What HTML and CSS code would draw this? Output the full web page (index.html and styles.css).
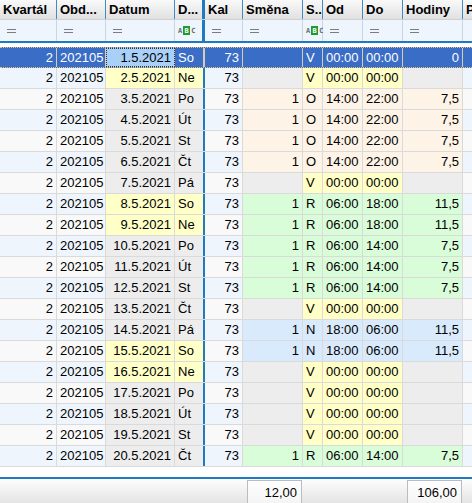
FILE: index.html
```html
<!DOCTYPE html>
<html lang="cs">
<head>
<meta charset="utf-8">
<title>Směny</title>
<link rel="stylesheet" href="styles.css">
</head>
<body>
<div class="grid">
  <div class="cols head">
    <div class="h">Kvartál</div><div class="h">Obd...</div><div class="h">Datum</div><div class="h frozen">D...</div><div class="h">Kal</div><div class="h">Směna</div><div class="h">S..</div><div class="h">Od</div><div class="h">Do</div><div class="h">Hodiny</div><div class="h last">P</div>
  </div>
  <div class="cols filter">
    <div class="f"><span class="eq"></span></div><div class="f"><span class="eq"></span></div><div class="f"><span class="eq"></span></div><div class="f frozen abcf"><span class="abc"><i>A</i><b>B</b><i>C</i></span></div><div class="f"><span class="eq"></span></div><div class="f"><span class="eq"></span></div><div class="f abcf"><span class="abc"><i>A</i><b>B</b><i>C</i></span></div><div class="f"><span class="eq"></span></div><div class="f"><span class="eq"></span></div><div class="f"><span class="eq"></span></div><div class="f last"></div>
  </div>
  <div class="sep-top"></div>

  <div class="cols row sel">
    <div class="num">2</div><div class="num">202105</div><div class="num focus">1.5.2021</div><div class="dcol">So</div><div class="num">73</div><div class="num"></div><div>V</div><div>00:00</div><div>00:00</div><div class="num">0</div><div></div>
  </div>
  <div class="cols row alt">
    <div class="num">2</div><div class="num">202105</div><div class="num wk">2.5.2021</div><div class="dcol wk">Ne</div><div class="num">73</div><div class="num sv"></div><div class="sy">V</div><div class="sy">00:00</div><div class="sy">00:00</div><div class="num sv"></div><div></div>
  </div>
  <div class="cols row">
    <div class="num">2</div><div class="num">202105</div><div class="num wd">3.5.2021</div><div class="dcol wd">Po</div><div class="num">73</div><div class="num so">1</div><div class="so">O</div><div class="so">14:00</div><div class="so">22:00</div><div class="num so">7,5</div><div></div>
  </div>
  <div class="cols row alt">
    <div class="num">2</div><div class="num">202105</div><div class="num wd">4.5.2021</div><div class="dcol wd">Út</div><div class="num">73</div><div class="num so">1</div><div class="so">O</div><div class="so">14:00</div><div class="so">22:00</div><div class="num so">7,5</div><div></div>
  </div>
  <div class="cols row">
    <div class="num">2</div><div class="num">202105</div><div class="num wd">5.5.2021</div><div class="dcol wd">St</div><div class="num">73</div><div class="num so">1</div><div class="so">O</div><div class="so">14:00</div><div class="so">22:00</div><div class="num so">7,5</div><div></div>
  </div>
  <div class="cols row alt">
    <div class="num">2</div><div class="num">202105</div><div class="num wd">6.5.2021</div><div class="dcol wd">Čt</div><div class="num">73</div><div class="num so">1</div><div class="so">O</div><div class="so">14:00</div><div class="so">22:00</div><div class="num so">7,5</div><div></div>
  </div>
  <div class="cols row">
    <div class="num">2</div><div class="num">202105</div><div class="num wd">7.5.2021</div><div class="dcol wd">Pá</div><div class="num">73</div><div class="num sv"></div><div class="sy">V</div><div class="sy">00:00</div><div class="sy">00:00</div><div class="num sv"></div><div></div>
  </div>
  <div class="cols row alt">
    <div class="num">2</div><div class="num">202105</div><div class="num wk">8.5.2021</div><div class="dcol wk">So</div><div class="num">73</div><div class="num sr">1</div><div class="sr">R</div><div class="sr">06:00</div><div class="sr">18:00</div><div class="num sr">11,5</div><div></div>
  </div>
  <div class="cols row">
    <div class="num">2</div><div class="num">202105</div><div class="num wk">9.5.2021</div><div class="dcol wk">Ne</div><div class="num">73</div><div class="num sr">1</div><div class="sr">R</div><div class="sr">06:00</div><div class="sr">18:00</div><div class="num sr">11,5</div><div></div>
  </div>
  <div class="cols row alt">
    <div class="num">2</div><div class="num">202105</div><div class="num wd">10.5.2021</div><div class="dcol wd">Po</div><div class="num">73</div><div class="num sr">1</div><div class="sr">R</div><div class="sr">06:00</div><div class="sr">14:00</div><div class="num sr">7,5</div><div></div>
  </div>
  <div class="cols row">
    <div class="num">2</div><div class="num">202105</div><div class="num wd">11.5.2021</div><div class="dcol wd">Út</div><div class="num">73</div><div class="num sr">1</div><div class="sr">R</div><div class="sr">06:00</div><div class="sr">14:00</div><div class="num sr">7,5</div><div></div>
  </div>
  <div class="cols row alt">
    <div class="num">2</div><div class="num">202105</div><div class="num wd">12.5.2021</div><div class="dcol wd">St</div><div class="num">73</div><div class="num sr">1</div><div class="sr">R</div><div class="sr">06:00</div><div class="sr">14:00</div><div class="num sr">7,5</div><div></div>
  </div>
  <div class="cols row">
    <div class="num">2</div><div class="num">202105</div><div class="num wd">13.5.2021</div><div class="dcol wd">Čt</div><div class="num">73</div><div class="num sv"></div><div class="sy">V</div><div class="sy">00:00</div><div class="sy">00:00</div><div class="num sv"></div><div></div>
  </div>
  <div class="cols row alt">
    <div class="num">2</div><div class="num">202105</div><div class="num wd">14.5.2021</div><div class="dcol wd">Pá</div><div class="num">73</div><div class="num sn">1</div><div class="sn">N</div><div class="sn">18:00</div><div class="sn">06:00</div><div class="num sn">11,5</div><div></div>
  </div>
  <div class="cols row">
    <div class="num">2</div><div class="num">202105</div><div class="num wk">15.5.2021</div><div class="dcol wk">So</div><div class="num">73</div><div class="num sn">1</div><div class="sn">N</div><div class="sn">18:00</div><div class="sn">06:00</div><div class="num sn">11,5</div><div></div>
  </div>
  <div class="cols row alt">
    <div class="num">2</div><div class="num">202105</div><div class="num wk">16.5.2021</div><div class="dcol wk">Ne</div><div class="num">73</div><div class="num sv"></div><div class="sy">V</div><div class="sy">00:00</div><div class="sy">00:00</div><div class="num sv"></div><div></div>
  </div>
  <div class="cols row">
    <div class="num">2</div><div class="num">202105</div><div class="num wd">17.5.2021</div><div class="dcol wd">Po</div><div class="num">73</div><div class="num sv"></div><div class="sy">V</div><div class="sy">00:00</div><div class="sy">00:00</div><div class="num sv"></div><div></div>
  </div>
  <div class="cols row alt">
    <div class="num">2</div><div class="num">202105</div><div class="num wd">18.5.2021</div><div class="dcol wd">Út</div><div class="num">73</div><div class="num sv"></div><div class="sy">V</div><div class="sy">00:00</div><div class="sy">00:00</div><div class="num sv"></div><div></div>
  </div>
  <div class="cols row">
    <div class="num">2</div><div class="num">202105</div><div class="num wd">19.5.2021</div><div class="dcol wd">St</div><div class="num">73</div><div class="num sv"></div><div class="sy">V</div><div class="sy">00:00</div><div class="sy">00:00</div><div class="num sv"></div><div></div>
  </div>
  <div class="cols row alt">
    <div class="num">2</div><div class="num">202105</div><div class="num wd">20.5.2021</div><div class="dcol wd">Čt</div><div class="num">73</div><div class="num sr">1</div><div class="sr">R</div><div class="sr">06:00</div><div class="sr">14:00</div><div class="num sr">7,5</div><div></div>
  </div>

  <div class="gap"></div>
  <div class="sep-bot"></div>
  <div class="cols foot">
    <div></div><div></div><div></div><div></div><div></div><div><span class="box">12,00</span></div><div></div><div></div><div></div><div><span class="box">106,00</span></div><div></div>
  </div>
</div>
</body>
</html>
```

FILE: styles.css
```css
html, body {
  margin: 0;
  padding: 0;
}
body {
  font-family: "Liberation Sans", Arial, sans-serif;
  font-size: 13px;
  color: #000;
  background: #fff;
  width: 472px;
  height: 503px;
  overflow: hidden;
}
.grid {
  width: 472px;
}
.cols {
  display: grid;
  grid-template-columns: 57px 49px 69px 30px 38px 60px 20px 40px 40px 60px 1fr;
}

/* header */
.head {
  height: 20px;
  box-sizing: border-box;
  background: linear-gradient(#f9f9f9, #e1e1e1);
  border-bottom: 1px solid #d0d0d0;
  font-weight: bold;
}
.head .h {
  border-right: 1px solid #3d8ccc;
  padding-left: 3px;
  line-height: 19px;
  white-space: nowrap;
  overflow: hidden;
}
.head .h.frozen {
  border-right: 3px solid #1f7bc1;
}
.head .h.last,
.filter .f.last {
  border-right: 0;
}

/* filter row */
.filter {
  height: 21px;
  background: #eef5fc;
}
.filter .f {
  border-right: 1px solid #c4d7ea;
  display: flex;
  align-items: center;
  padding-left: 7px;
}
.filter .f.frozen {
  border-right: 3px solid #1f7bc1;
}
.filter .f.abcf {
  padding-left: 3px;
}
.eq {
  width: 9px;
  height: 2px;
  border-top: 1px solid #7c7c7c;
  border-bottom: 1px solid #7c7c7c;
}
.abc {
  display: flex;
  align-items: center;
  gap: 1px;
  font-family: "DejaVu Sans Mono", monospace;
  font-size: 7px;
  font-weight: bold;
  color: #6a6a6a;
}
.abc i {
  font-style: normal;
}
.abc b {
  display: flex;
  align-items: center;
  justify-content: center;
  width: 7px;
  height: 9px;
  background: #1d9b32;
  color: #fff;
}

.sep-top {
  height: 2px;
  background: #1f7bc1;
  margin-bottom: 4px;
}

/* data rows */
.row {
  height: 21px;
  box-sizing: border-box;
  border-bottom: 1px solid #dadada;
  background: #f9f9f9;
}
.row.alt {
  background: #eef5fd;
}
.row > div {
  border-right: 1px solid #dadada;
  padding: 0 3px;
  line-height: 20px;
  white-space: nowrap;
  overflow: hidden;
}
.row > div:last-child {
  border-right: 0;
}
.row > .dcol {
  border-right: 2px solid #1f7bc1;
}
.num {
  text-align: right;
}
.wk { background: #ffffc8; }
.wd { background: #ededed; }
.sv { background: #ededed; }
.sy { background: #ffffc6; }
.so { background: #fdf3e7; }
.sr { background: #d9fcd9; }
.sn { background: #d9eafc; }

.row.sel {
  background: #3a6dc5;
  color: #fff;
  border-top: 1px dotted #e6c27a;
  border-bottom: 1px dotted #e6c27a;
}
.row.sel > div {
  border-right-color: #d8cdb0;
  line-height: 19px;
}
.row.sel > .dcol {
  border-right: 2px solid #d8cdb0;
}
.row.sel > .focus {
  background: #a9d0f8;
  color: #000;
  outline: 1px dotted #333;
  outline-offset: -1px;
}

/* footer */
.gap {
  height: 10px;
}
.sep-bot {
  height: 2px;
  background: #1f7bc1;
}
.foot {
  height: 24px;
  background: linear-gradient(#fdfdfd, #e4e4e4);
  overflow: hidden;
}
.foot > div {
  display: flex;
}
.box {
  flex: 1;
  margin: 1px 1px 0 4px;
  height: 30px;
  border: 1px solid #bcbcbc;
  background: linear-gradient(#fefefe, #f1f1f1);
  text-align: right;
  padding-right: 4px;
  line-height: 23px;
}
```
